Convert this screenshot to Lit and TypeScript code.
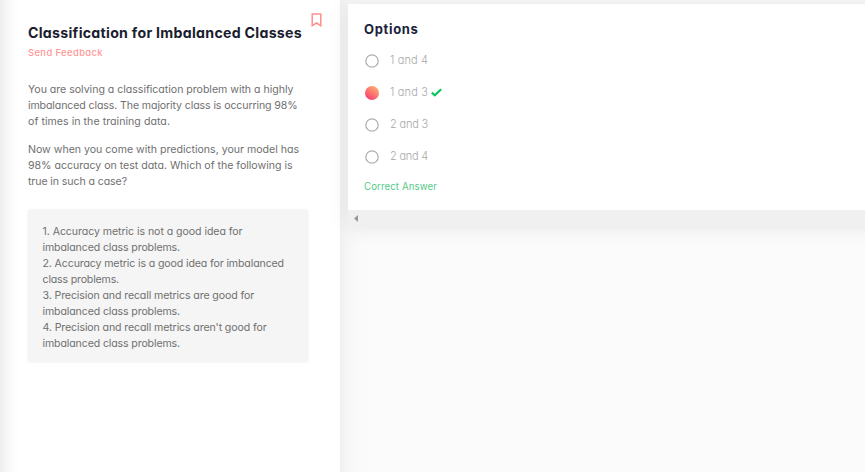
import { LitElement, html, css } from "lit";
import { customElement, property, query } from "lit/decorators.js";

/** One line of text whose tracking is adjusted to fill a given measure. */
@customElement("text-line")
class TextLine extends LitElement {
  static styles = css`
    :host { display: block; white-space: nowrap; }
  `;
  @property() text = "";
  @property({ type: Number }) measure = 0;
  @query("span") span!: HTMLSpanElement;

  render() {
    return html`<span>${this.text}</span>`;
  }

  updated() {
    this.span.style.letterSpacing = "0px";
    const natural = this.span.getBoundingClientRect().width;
    const tracking = (this.measure - natural) / this.text.length;
    this.span.style.letterSpacing = `${tracking.toFixed(3)}px`;
  }
}

type Line = [string, number];

const question: Line[][] = [
  [
    ["You are solving a classification problem with a highly", 265.5],
    ["imbalanced class. The majority class is occurring 98%", 269.5],
    ["of times in the training data.", 142],
  ],
  [
    ["Now when you come with predictions, your model has", 271],
    ["98% accuracy on test data. Which of the following is", 264.5],
    ["true in such a case?", 99],
  ],
];

const statements: Line[] = [
  ["1. Accuracy metric is not a good idea for", 200],
  ["imbalanced class problems.", 137.5],
  ["2. Accuracy metric is a good idea for imbalanced", 241.5],
  ["class problems.", 76.5],
  ["3. Precision and recall metrics are good for", 211.5],
  ["imbalanced class problems.", 137.5],
  ["4. Precision and recall metrics aren't good for", 224],
  ["imbalanced class problems.", 137.5],
];

const options = [
  { label: "1 and 4", chosen: false },
  { label: "1 and 3", chosen: true },
  { label: "2 and 3", chosen: false },
  { label: "2 and 4", chosen: false },
];

@customElement("app-root")
class AppRoot extends LitElement {
  static styles = css`
    :host {
      display: flex;
      width: 100%;
      height: 472px;
      overflow: hidden;
      background: #fbfbfb;
      font: 400 10.6px/16px Inter, "Noto Sans", sans-serif;
      font-feature-settings: "cv11" 1;
      color: #707070;
    }
    .problem {
      box-sizing: border-box;
      flex: none;
      width: 340px;
      padding: 12px 18px 0 28px;
      background: linear-gradient(90deg, #eeeeee 0, #f6f6f6 6px, #fcfcfc 12px, #fff 19px);
    }
    .heading { display: flex; justify-content: space-between; }
    .title {
      margin-top: 11px;
      font-size: 14.2px;
      line-height: 20px;
      font-weight: 700;
      color: #1b1d2e;
    }
    .bookmark { display: block; margin-top: 1px; }
    .feedback { margin-top: 2px; font-size: 9.4px; font-weight: 500; color: #ff9696; }
    .question { margin-top: 21px; }
    .question p { margin: 0 0 12px; }
    .statements {
      box-sizing: border-box;
      width: 280px;
      height: 152px;
      margin-top: 20px;
      padding: 14px 13px 0 14.5px;
      border-radius: 3px;
      background: #f5f5f5;
      box-shadow: 0 0 3px rgba(0, 0, 0, 0.08);
    }
    .answers {
      flex: 1;
      min-width: 0;
      padding: 4px 0 0 8px;
      background: linear-gradient(90deg, #f0f0f0 0, #f6f6f6 8px, #fafafa 20px, #fbfbfb 35px);
    }
    .frame { margin-right: -30px; box-shadow: 0 0 20px rgba(0, 0, 0, 0.09); }
    .card {
      box-sizing: border-box;
      height: 206px;
      padding: 15px 16px 0;
      background: #fff;
    }
    .card-title { font-size: 13px; line-height: 20px; font-weight: 700; color: #20223c; }
    .options { margin-top: 5px; }
    .option { display: flex; align-items: center; height: 32px; color: #a9a9a9; font-weight: 300; font-size: 11px; }
    .radio { display: block; margin: 1px 11px 0 1px; }
    .chosen {
      width: 14px;
      height: 14px;
      border-radius: 50%;
      background: linear-gradient(35deg, #f93a75 12%, #fb7070 45%, #ffb46e 95%);
    }
    .check { display: block; margin-left: 2.5px; }
    .verdict { margin-top: 7px; font-size: 9.7px; color: #55c98a; }
    .scrollbar {
      display: flex;
      align-items: center;
      height: 17px;
      padding-left: 6px;
      background: #f0f0f0;
    }
  `;

  private lines(rows: Line[]) {
    return rows.map(([text, measure]) => html`<text-line .text=${text} .measure=${measure}></text-line>`);
  }

  render() {
    return html`
      <section class="problem">
        <div class="heading">
          <text-line class="title" .text=${"Classification for Imbalanced Classes"} .measure=${274}></text-line>
          <svg class="bookmark" width="11" height="14" viewBox="0 0 11 14" fill="none" stroke="#ff8f8f" stroke-width="1.5">
            <path d="M1.2 1h8.6v11.6L5.5 10 1.2 12.6z" />
          </svg>
        </div>
        <text-line class="feedback" .text=${"Send Feedback"} .measure=${75}></text-line>
        <div class="question">${question.map((rows) => html`<p>${this.lines(rows)}</p>`)}</div>
        <div class="statements">${this.lines(statements)}</div>
      </section>
      <section class="answers">
        <div class="frame">
          <div class="card">
            <text-line class="card-title" .text=${"Options"} .measure=${54.5}></text-line>
            <div class="options">
              ${options.map(
                (o) => html`<div class="option">
                  ${o.chosen
                    ? html`<span class="radio chosen"></span>`
                    : html`<svg class="radio" width="14" height="14" viewBox="0 0 14 14">
                        <circle cx="7" cy="7" r="6.2" fill="#fff" stroke="#b0b0b0" stroke-width="1.3" />
                      </svg>`}
                  <text-line .text=${o.label} .measure=${38}></text-line>
                  ${o.chosen
                    ? html`<svg class="check" width="11" height="9" viewBox="0 0 11 9" fill="none" stroke="#08c55c" stroke-width="2.1">
                        <path d="M.8 4.6 3.8 7.3 10.2 1.2" />
                      </svg>`
                    : ""}
                </div>`
              )}
            </div>
            <text-line class="verdict" .text=${"Correct Answer"} .measure=${73}></text-line>
          </div>
          <div class="scrollbar">
            <svg width="4" height="7" viewBox="0 0 4 7"><path d="M4 0v7L0 3.5z" fill="#999" /></svg>
          </div>
        </div>
      </section>
    `;
  }
}
